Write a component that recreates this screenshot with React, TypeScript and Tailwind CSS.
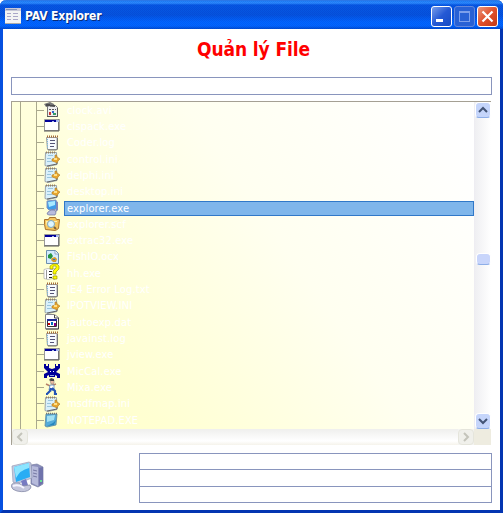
import React from "react";

type Kind =
  | "avi" | "app" | "log" | "ini" | "explorer" | "folder" | "ocx"
  | "help" | "dat" | "mic" | "mixa" | "notepad";

const files: { name: string; kind: Kind }[] = [
  { name: "clock.avi", kind: "avi" },
  { name: "clspack.exe", kind: "app" },
  { name: "Coder.log", kind: "log" },
  { name: "control.ini", kind: "ini" },
  { name: "delphi.ini", kind: "ini" },
  { name: "desktop.ini", kind: "ini" },
  { name: "explorer.exe", kind: "explorer" },
  { name: "explorer.scf", kind: "folder" },
  { name: "extrac32.exe", kind: "app" },
  { name: "FlshIO.ocx", kind: "ocx" },
  { name: "hh.exe", kind: "help" },
  { name: "IE4 Error Log.txt", kind: "log" },
  { name: "IPOTVIEW.INI", kind: "ini" },
  { name: "jautoexp.dat", kind: "dat" },
  { name: "javainst.log", kind: "log" },
  { name: "jview.exe", kind: "app" },
  { name: "MicCal.exe", kind: "mic" },
  { name: "Mixa.exe", kind: "mixa" },
  { name: "msdfmap.ini", kind: "ini" },
  { name: "NOTEPAD.EXE", kind: "notepad" },
];

function Glyph({ kind }: { kind: Kind }) {
  switch (kind) {
    case "avi":
      return (
        <>
          <path d="M3.500 3.500h8l2 2v9h-10z" fill="#eee" stroke="#777" />
          <path d="M13.500 6v8.500H3" fill="none" stroke="#555" />
          <path d="M0 2l6-2 4 2 1 3-4-1-5 1z" fill="#777" />
          <path d="M2 3h4M6 4h5" stroke="#222" />
          <path d="M5 7.500h7" stroke="#555" strokeDasharray="2 1" />
          <path d="M5 10h2v3H5z" fill="#c33" />
          <path d="M8 9h2v2H8z" fill="#36c" />
          <path d="M9 11h3v2H9z" fill="#396" />
        </>
      );
    case "app":
      return (
        <>
          <path d="M.5 1.500h14v11H.5z" fill="#fff" stroke="#999" />
          <path d="M15 1v12H0" fill="none" stroke="#555" />
          <path d="M1 2h11v2H1z" fill="#000099" />
          <path d="M8 3h2v1H8zM12 2h3v2h-3z" fill="#a9b9e9" />
        </>
      );
    case "log":
      return (
        <>
          <path d="M2.500 2.500h10.500v12h-9.500z" fill="#f7fbff" stroke="#9a9a98" />
          <path d="M13.500 3v11l-1 1H4" fill="none" stroke="#777" />
          <path d="M3 1.500h11" stroke="#a66b35" strokeWidth="2" strokeDasharray="1 1" />
          <path d="M6 5.500h5M6 8.500h5M6 11.500h4" stroke="#557" />
          <path d="M3.500 4v10" stroke="#7bb9db" strokeDasharray="1 1" />
        </>
      );
    case "ini":
      return (
        <>
          <path d="M1.500 1.500h11l.5 12-9 2-3-1z" fill="#d9f0fb" stroke="#9aa4aa" />
          <path d="M2 1.500h10" stroke="#9a825c" strokeWidth="2" strokeDasharray="1 1" />
          <path d="M4 4.500h5M3 7.500h4M3 10.500h5" stroke="#9ac5dd" />
          <path d="M3 15l10-2v-2" fill="none" stroke="#666" />
          <path d="M11 4l1.500 0 .5 2 3 2-2 2-1 2-2-1-3-1V8l3-1z" fill="#e9a72c" stroke="#a9782c" strokeWidth=".6" />
          <path d="M10 7h3v2h-3z" fill="#ffdf86" />
        </>
      );
    case "explorer":
      return (
        <>
          <path d="M3 1l9-1 1 9-8 1-2-2z" fill="#3e9ce8" stroke="#8394bf" />
          <path d="M4 2l7-1v4L5 7z" fill="#a9e9ff" />
          <path d="M12 1l2 1v8l-2 2z" fill="#8187b8" />
          <path d="M7 10h4l1 3-1 2H5l-2-1 1-2z" fill="#b9bddd" stroke="#6870a1" strokeWidth=".7" />
        </>
      );
    case "folder":
      return (
        <>
          <path d="M.5 3.500h4l1-2h6l1 2h3l-1 9-3 2-10-1-1-5z" fill="#f5c65e" stroke="#aa732c" />
          <path d="M2 5h11v1H3l-1 5z" fill="#fff0b4" />
          <circle cx="7" cy="8" r="3.500" fill="#dff7ff" stroke="#7ca8c0" />
          <path d="M10 11l2 2" stroke="#7e633e" strokeWidth="2" />
        </>
      );
    case "ocx":
      return (
        <>
          <path d="M2.500 1.500h9l3 3v10h-12z" fill="#d3ebff" stroke="#6d8fae" />
          <path d="M11 2v3h3" fill="#fff" stroke="#8ba6c5" />
          <path d="M4 6l3-2 2 3-2 3-3-1z" fill="#269442" />
          <path d="M8 9l3-1 2 2-1 3H9l-2-2z" fill="#d49b29" />
          <path d="M9 10h2v1H9z" fill="#346fc2" />
        </>
      );
    case "help":
      return (
        <>
          <path d="M0 4.500l4-1 4 1 3-1v11l-3-1-4 1-4-1z" fill="#fff" stroke="#aaa" strokeWidth=".7" />
          <path d="M5 6.500h3M5 9.500h3M5 12.500h3" stroke="#222" />
          <path d="M2.500 5v9" stroke="#999" />
          <path d="M6 4V1l3-2 4 0 2 2v3l-3 3v2H9V6l3-3V1H9v3z" fill="#ffff00" stroke="#8d8600" strokeWidth=".6" />
          <path d="M9 11h4v3H9z" fill="#ffff00" stroke="#8d8600" strokeWidth=".6" />
        </>
      );
    case "dat":
      return (
        <>
          <path d="M1.500.500h9l4 3v11.500h-13z" fill="#fff" stroke="#888" />
          <path d="M10.500 1v3h4v11H2" fill="none" stroke="#444" />
          <path d="M3.500 5.500h9v7h-9z" fill="#fff" stroke="#333" />
          <path d="M3 5h10v2H3z" fill="#1d2993" />
          <path d="M4 9h2v2H4z" fill="#c00" />
          <path d="M7 8h2v3H7z" fill="#0070c0" />
          <path d="M10 9h2v3h-2z" fill="#808" />
        </>
      );
    case "mic":
      return (
        <>
          <path d="M0 1h2v2h2V1h1v4l3 1 3-1V1h1v2h2V1h2v4l-3 3-1 1 4 2v4h-3v-2l-2-1v2H5v-2l-2 1v2H0v-4l4-2-1-1-3-3z" fill="#000099" />
          <path d="M6 8h1v1H6zM9 8h1v1H9z" fill="#fff" />
          <path d="M6 12.500h4" stroke="#8ca5e8" />
        </>
      );
    case "mixa":
      return (
        <>
          <path d="M6 1h4v3L9 5H7z" fill="#eabba2" stroke="#777" strokeWidth=".5" />
          <path d="M5 1l2-2 3 1v2H7z" fill="#444" />
          <path d="M2 5l4 2 6-2" fill="none" stroke="#b78168" strokeWidth="1.500" />
          <path d="M6 6h4l0 4-2 2-3-1z" fill="#fff" stroke="#5588bb" strokeWidth=".8" />
          <path d="M7 9l-1 3-3 3H2M8 9l3 3v3h2" fill="none" stroke="#2453b5" strokeWidth="2.200" />
        </>
      );
    default:
      return (
        <>
          <path d="M2 2h11l-1 11-9 2-2-1z" fill="#55acd9" stroke="#5e8798" strokeWidth=".8" />
          <path d="M3 4l8-1-1 5-7 2z" fill="#a4e1f2" />
          <path d="M2 1.500h11" stroke="#777" strokeWidth="1.500" strokeDasharray="1 1" />
          <path d="M12 8l-2 5-7 1 6-3z" fill="#2486bd" />
        </>
      );
  }
}

function FileRow({ name, kind }: { name: string; kind: Kind }) {
  const selected = kind === "explorer";
  return (
    <li className="flex h-[16.32px] shrink-0 items-center">
      <span className="ml-6 w-2 border-t border-[#aaa98d]" />
      <svg className="size-4 shrink-0 overflow-visible" viewBox="0 0 16 16">
        <Glyph kind={kind} />
      </svg>
      <span
        className={
          selected
            ? "ml-1 flex h-[15px] flex-1 items-center border border-[#3078c8] bg-[#7fb6eb] pl-[2px] text-white"
            : "ml-1 flex h-[15px] flex-1 items-center pl-[3px] text-white"
        }
      >
        {name}
      </span>
    </li>
  );
}

function Arrow({ d, disabled = false }: { d: string; disabled?: boolean }) {
  return (
    <span
      className={
        disabled
          ? "flex size-4 shrink-0 items-center justify-center rounded-sm border border-[#e5e5dc] bg-[#f0f0eb]"
          : "flex size-4 shrink-0 items-center justify-center rounded-sm border border-white border-b-[#8daee8] bg-[#c5d5fb]"
      }
    >
      <svg className="size-[10px]" viewBox="0 0 10 10" fill="none" stroke={disabled ? "#c4c4bb" : "#435476"} strokeWidth="2">
        <path d={d} />
      </svg>
    </span>
  );
}

function Computer() {
  return (
    <svg className="mt-2 h-8 w-[33px]" viewBox="0 0 33 32">
      <path d="M20 4l6-1 6 3v17l-5 3-7-3z" fill="#8d91bd" stroke="#777ca1" strokeWidth=".7" />
      <path d="M21 5l6 1v19l-6-3z" fill="#b6badb" />
      <path d="M28 7l4-1v16l-4 3z" fill="#6f73ab" />
      <path d="M22 9l4 1M22 12l4 1M22 15l4 1" stroke="#777aa4" />
      <path d="M29 20h2" stroke="#65df92" strokeWidth="2" />
      <path d="M1 5l17-4 2 1 1 15-16 6-3-2z" fill="#c3c9df" stroke="#969db7" strokeWidth=".7" />
      <path d="M3 6l15-4 1 14-14 5z" fill="#28adf4" />
      <path d="M3 6l15-4v5Q9 9 5 17z" fill="#8ce5ff" />
      <path d="M10 20l5-2 2 6-5 3z" fill="#777bc2" />
      <path d="M0 25q1-4 8-3l4 3 7-1q2 2 0 4-4 4-13 2-5-1-6-5z" fill="#c4c6dc" stroke="#858aa7" strokeWidth=".8" />
      <path d="M2 25q6-2 11 2" fill="none" stroke="#f5f5ff" strokeWidth="2" />
    </svg>
  );
}

export default function App() {
  return (
    <div className="h-[513px] w-[503px] overflow-hidden bg-white font-['DejaVu_Sans_Condensed','DejaVu_Sans',sans-serif]">
      <main className="flex h-full flex-col rounded-t-[6px] border-x-[3px] border-b-[3px] border-[#0650e0] border-r-[#0435b1] border-b-[#0435b1] bg-white">
        <header className="-mx-[3px] flex h-[29px] shrink-0 items-center rounded-t-[6px] border-t border-[#2a77e8] bg-[repeating-conic-gradient(#0033cc30_0_25%,#0070ff24_0_50%),linear-gradient(to_bottom,#2584f5_0px,#3391ff_2px,#0755df_4px,#0650d9_14px,#0065ff_21px,#0065ff_25px,#0047c8_28px)] bg-[length:2px_2px,100%_100%] pt-[2px] pr-[5px] pl-[5px]">
          <svg className="size-4" viewBox="0 0 16 16" shapeRendering="crispEdges">
            <path d="M0 0h16v16H0z" fill="#f3f3f3" />
            <path d="M0 0h16v3H0z" fill="#c8c8d8" />
            <path d="M1 1.500h11" stroke="#8492b8" />
            <path d="M2 5.500h4M8 5.500h5M2 8.500h4M8 8.500h5M2 11.500h4M8 11.500h5" stroke="#aaa6c8" />
            <path d="M0 15.500h16" stroke="#aaa" />
          </svg>
          <h1 className="ml-1 text-[12px] leading-none font-bold tracking-[-0.1px] text-white [text-shadow:1px_1px_#082c79]">
            PAV Explorer
          </h1>
          <div className="ml-auto flex gap-[2px]">
            <span className="flex size-[21px] items-end rounded-[3px] border border-white bg-[linear-gradient(135deg,#789dea,#2459d5_50%,#164bc4)] pb-1 pl-1">
              <span className="h-[3px] w-[7px] bg-white" />
            </span>
            <span className="flex size-[21px] items-center justify-center rounded-[3px] border border-[#6488dc] bg-[#2861d5]">
              <span className="size-[11px] border border-t-2 border-[#7c9feb]" />
            </span>
            <span className="flex size-[21px] items-center justify-center rounded-[3px] border border-white bg-[linear-gradient(135deg,#eb967c,#df502c_50%,#c33913)]">
              <svg className="size-[13px]" viewBox="0 0 13 13" stroke="white" strokeWidth="2.200">
                <path d="M1.500 1.500l10 10M11.500 1.500l-10 10" />
              </svg>
            </span>
          </div>
        </header>

        <h2 className="flex h-12 shrink-0 items-center justify-center pb-[7px] pl-1 text-[19px] font-bold tracking-[-0.1px] text-[#ff0000]">
          Quản lý File
        </h2>
        <input aria-label="Path" className="mr-2 ml-2 h-[18px] shrink-0 border border-[#8995bd] bg-white outline-none" />

        <section className="mt-[6px] mr-[9px] ml-2 flex h-[344px] shrink-0 flex-col border-t border-l border-[#a5a094]">
          <div className="flex h-[327px]">
            <ul className="flex flex-1 flex-col overflow-hidden bg-[linear-gradient(#aaa98d,#aaa98d),linear-gradient(#aaa98d,#aaa98d),linear-gradient(55deg,#ffffc8_0%,#ffffd2_22%,#fffff0_58%,#ffffff_95%)] bg-[length:1px_100%,1px_100%,100%_100%] bg-[position:8px_0,24px_0,0_0] bg-no-repeat text-[11px] leading-none tracking-[0.15px]">
              {files.map((file) => <FileRow key={file.name} {...file} />)}
            </ul>
            <div className="flex w-[17px] flex-col items-center justify-between border-l border-[#eeedf2] bg-[linear-gradient(to_right,#efeff2,#fff)]">
              <Arrow d="M1 7l4-4 4 4" />
              <span className="mb-[14px] h-3 w-[15px] rounded-sm border border-white border-b-[#8daee8] bg-[#c8d5fb]" />
              <Arrow d="M1 3l4 4 4-4" />
            </div>
          </div>
          <div className="flex h-4 bg-[#f4f4f2]">
            <Arrow disabled d="M7 1L3 5l4 4" />
            <span className="flex-1 bg-[linear-gradient(to_bottom,#efefed,#fff_75%,#f5f3eb)]" />
            <Arrow disabled d="M3 1l4 4-4 4" />
            <span className="w-[17px] bg-[#eeece0]" />
          </div>
        </section>

        <footer className="mt-2 mr-2 ml-2 flex h-[50px] shrink-0 justify-between">
          <Computer />
          <div className="grid w-[353px] grid-rows-[16px_17px_15px] border border-[#8995bd]">
            <span className="border-b border-[#8995bd]" />
            <span className="border-b border-[#8995bd]" />
            <span />
          </div>
        </footer>
      </main>
    </div>
  );
}
